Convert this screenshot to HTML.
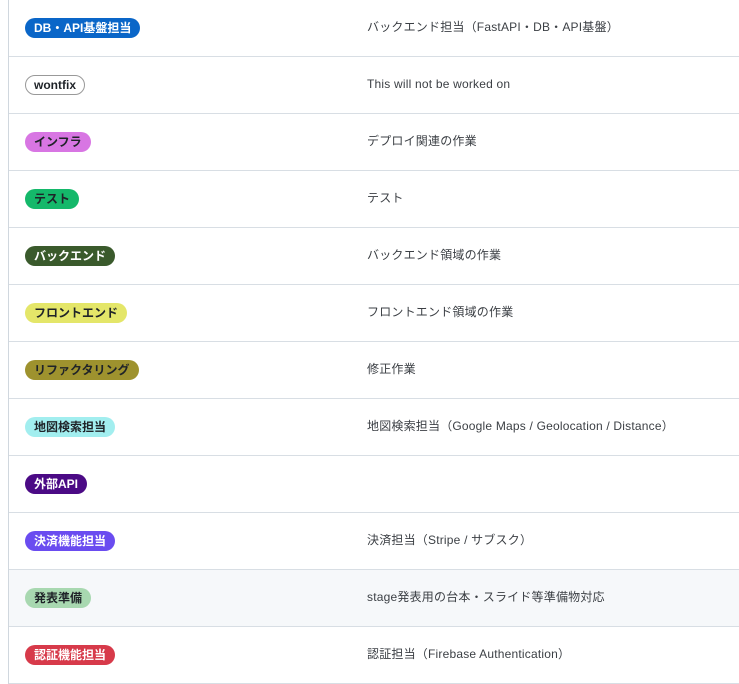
<html><head><style>
body{margin:0;width:739px;height:677px;overflow:hidden;background:#fff;font-family:"Liberation Sans","Noto Sans CJK JP",sans-serif;}
.wrap{position:absolute;left:8px;top:0px;right:-2px;border-left:1px solid #d0d7de;}
.row{height:56px;border-bottom:1px solid #d8dee4;position:relative;}
.row.hl{background:#f6f8fa;}
.lab{position:absolute;left:16px;top:18px;height:20px;line-height:20px;padding:0 9px;border-radius:10px;font-size:12px;font-weight:bold;white-space:nowrap;}
.d{position:absolute;left:358px;top:19px;font-size:12px;color:#3b3f44;line-height:16px;letter-spacing:0.2px;}
</style></head><body><div class="wrap">
<div class="row"><span class="lab" style="background:#0a66c8;color:#fff">DB・API基盤担当</span><span class="d">バックエンド担当（FastAPI・DB・API基盤）</span></div>
<div class="row"><span class="lab" style="background:#fff;color:#1f2328;border:1px solid #999;height:18px;line-height:18px;padding:0 8px">wontfix</span><span class="d">This will not be worked on</span></div>
<div class="row"><span class="lab" style="background:#d876e3;color:#1f2328">インフラ</span><span class="d">デプロイ関連の作業</span></div>
<div class="row"><span class="lab" style="background:#14b86a;color:#1f2328">テスト</span><span class="d">テスト</span></div>
<div class="row"><span class="lab" style="background:#3a5a2c;color:#fff">バックエンド</span><span class="d">バックエンド領域の作業</span></div>
<div class="row"><span class="lab" style="background:#e4e669;color:#1f2328">フロントエンド</span><span class="d">フロントエンド領域の作業</span></div>
<div class="row"><span class="lab" style="background:#9e922e;color:#1f2328">リファクタリング</span><span class="d">修正作業</span></div>
<div class="row"><span class="lab" style="background:#a2eeef;color:#1f2328">地図検索担当</span><span class="d">地図検索担当（Google Maps / Geolocation / Distance）</span></div>
<div class="row"><span class="lab" style="background:#4b0a85;color:#fff">外部API</span><span class="d"></span></div>
<div class="row"><span class="lab" style="background:#6a4cf0;color:#fff">決済機能担当</span><span class="d">決済担当（Stripe / サブスク）</span></div>
<div class="row hl"><span class="lab" style="background:#a8d8b0;color:#1f2328">発表準備</span><span class="d">stage発表用の台本・スライド等準備物対応</span></div>
<div class="row"><span class="lab" style="background:#d73a4a;color:#fff">認証機能担当</span><span class="d">認証担当（Firebase Authentication）</span></div>
</div></body></html>
